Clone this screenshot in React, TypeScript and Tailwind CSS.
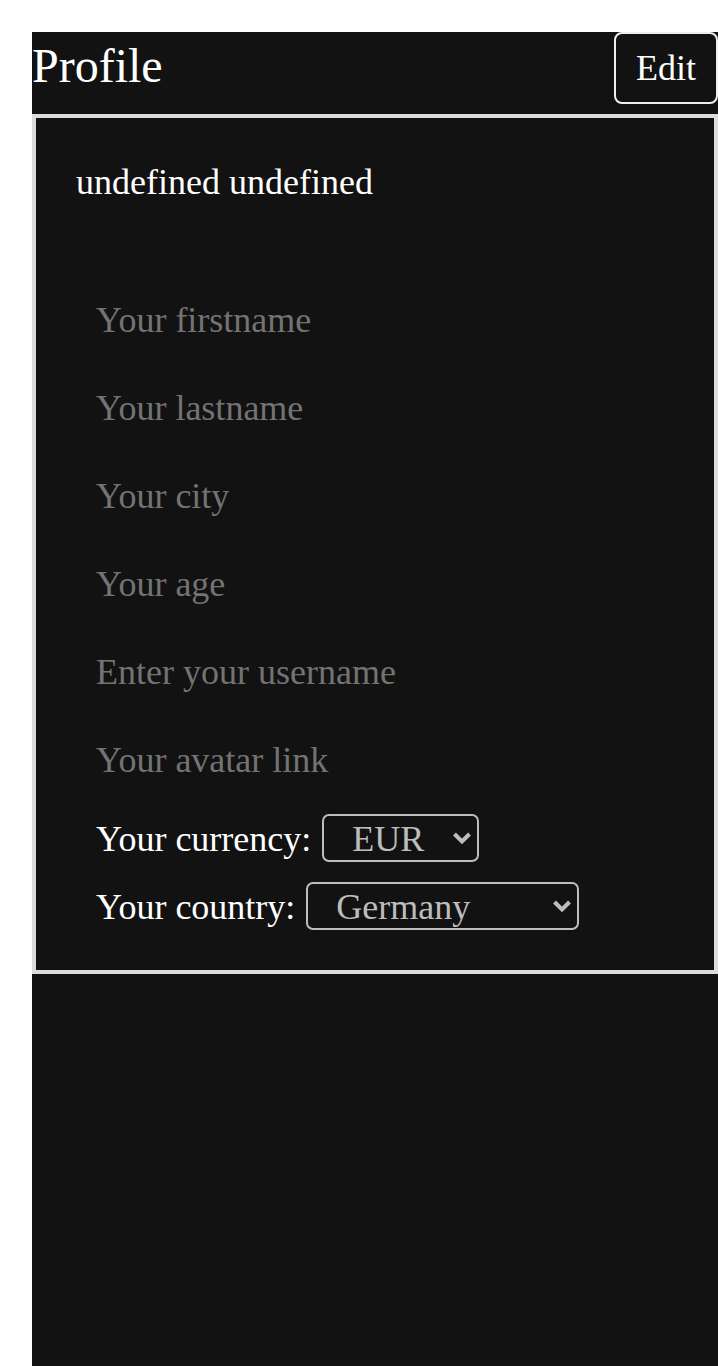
import { useState } from "react";

const fields = [
  "Your firstname",
  "Your lastname",
  "Your city",
  "Your age",
  "Enter your username",
  "Your avatar link",
];

function Chevron() {
  return (
    <svg
      width="20"
      height="13"
      viewBox="0 0 20 13"
      className="pointer-events-none absolute right-[7px] top-1/2 -translate-y-1/2"
    >
      <polyline
        points="2.5,2.5 10,10 17.5,2.5"
        fill="none"
        stroke="#bdbdbd"
        strokeWidth="4"
        strokeLinejoin="miter"
      />
    </svg>
  );
}

function Select({
  value,
  options,
  width,
  onChange,
}: {
  value: string;
  options: string[];
  width: string;
  onChange: (v: string) => void;
}) {
  return (
    <div className={`relative ${width}`}>
      <select
        value={value}
        onChange={(e) => onChange(e.target.value)}
        className="h-[48px] w-full appearance-none rounded-[7px] border-2 border-[#bdbdbd] bg-transparent pl-[28px] pt-[2px] text-[36px] leading-[40px] text-[#bdbdbd] outline-none"
      >
        {options.map((o) => (
          <option key={o} value={o} className="bg-[#121212]">
            {o}
          </option>
        ))}
      </select>
      <Chevron />
    </div>
  );
}

export default function App() {
  const [currency, setCurrency] = useState("EUR");
  const [country, setCountry] = useState("Germany");

  return (
    <div
      className="flex min-h-screen flex-col bg-white pl-8 pt-8"
      style={{ fontFamily: '"Liberation Serif", "Times New Roman", serif' }}
    >
      <div className="flex flex-1 flex-col bg-[#121212] text-white">
        {/* HEADER */}
        <header className="flex h-[82px] items-start justify-between">
          <h1 className="mt-[6px] text-[48px] leading-[55px] font-normal">
            Profile
          </h1>
          <button className="h-[72px] w-[104px] rounded-[8px] border-2 border-[#eeeeee] text-[36px] leading-[40px] text-white">
            Edit
          </button>
        </header>

        {/* PROFILE BOX */}
        <section className="border-4 border-[#dcdcdc] pb-[40px] pl-[40px] pt-[44px]">
          <p className="text-[36px] leading-[40px]">undefined undefined</p>

          <form className="ml-[20px] mt-[74px] flex flex-col">
            {fields.map((f) => (
              <input
                key={f}
                type="text"
                placeholder={f}
                className="h-[88px] w-[560px] bg-transparent text-[36px] leading-[40px] text-white outline-none placeholder:text-[#737373]"
              />
            ))}

            <div className="mt-[10px] flex items-center gap-[11px]">
              <label className="mt-[2px] text-[36px] leading-[40px]">
                Your currency:
              </label>
              <Select
                value={currency}
                options={["EUR", "USD", "GBP"]}
                width="w-[157px]"
                onChange={setCurrency}
              />
            </div>

            <div className="mt-[20px] flex items-center gap-[11px]">
              <label className="mt-[2px] text-[36px] leading-[40px]">
                Your country:
              </label>
              <Select
                value={country}
                options={["Germany", "France", "Netherlands"]}
                width="w-[273px]"
                onChange={setCountry}
              />
            </div>
          </form>
        </section>
      </div>
    </div>
  );
}
